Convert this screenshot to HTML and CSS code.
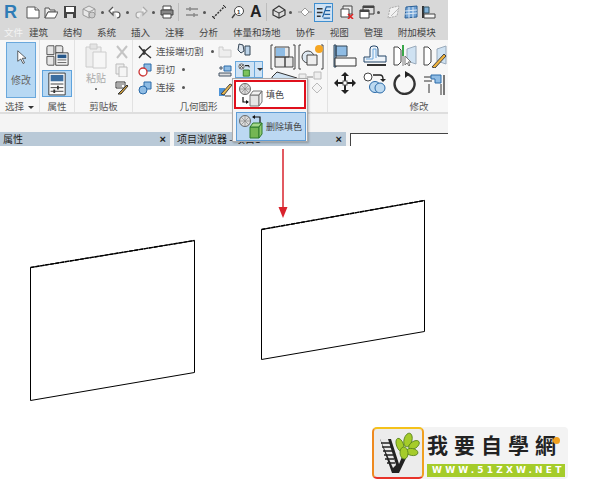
FILE: index.html
```html
<!DOCTYPE html>
<html lang="zh">
<head>
<meta charset="utf-8">
<title>填色</title>
<link rel="stylesheet" href="styles.css">
</head>
<body>
<div class="app">
  <header class="ribbon">
    <div class="qat">
      <span class="rlogo">R</span>
      <svg class="ic" viewBox="0 0 14 14"><path d="M1 2h8l4 3v8H1z" fill="#fff" stroke="#555"/><path d="M9 2v3h4" fill="#ddd" stroke="#555"/></svg>
      <svg class="ic" viewBox="0 0 14 14"><path d="M1 3h4l1 2h5v2H4l-3 6z" fill="#eee" stroke="#555"/><path d="M4 7h10l-3 6H1z" fill="#fff" stroke="#555"/></svg>
      <svg class="ic" viewBox="0 0 14 14"><path d="M1 1h12v12H1z" fill="#444"/><path d="M3 2h8v5H3z" fill="#fff"/><path d="M4 9h6v4H4z" fill="#ddd"/></svg>
      <svg class="ic" viewBox="0 0 14 14"><path d="M7 1l6 3v6l-6 3-6-3V4z" fill="#e8e8e8" stroke="#999"/><path d="M1 4l6 3 6-3M7 7v6" fill="none" stroke="#999"/><circle cx="10" cy="10" r="3" fill="#ccc" stroke="#999"/></svg>
      <span class="dot"></span>
      <svg class="ic" viewBox="0 0 14 14"><path d="M5 2L1 6l4 4V7h4q3 0 3 3t-3 3" fill="#fff" stroke="#555" stroke-width="1.2"/></svg>
      <span class="dot"></span>
      <svg class="ic" viewBox="0 0 14 14"><path d="M9 2l4 4-4 4V7H5q-3 0-3 3t3 3" fill="#eee" stroke="#aaa" stroke-width="1.2"/></svg>
      <span class="dot"></span>
      <svg class="ic" viewBox="0 0 14 14"><path d="M3 1h8v4H3z" fill="#fff" stroke="#444"/><path d="M1 5h12v5H1z" fill="#888" stroke="#444"/><path d="M3 9h8v4H3z" fill="#fff" stroke="#444"/></svg>
      <span class="sep"></span>
      <svg class="ic" viewBox="0 0 14 14"><path d="M1 4h12M1 10h12M5 2v4M9 8v4" fill="none" stroke="#888" stroke-width="1.4"/></svg>
      <span class="dot"></span>
      <svg class="ic" viewBox="0 0 14 14"><path d="M1 13L13 1" stroke="#333" stroke-width="1.5" stroke-dasharray="2 1.2"/><path d="M0 11l3 3M11 0l3 3" stroke="#333"/></svg>
      <svg class="ic" viewBox="0 0 14 14"><circle cx="8" cy="6" r="4.5" fill="#fff" stroke="#444"/><path d="M4 9l-3 4" stroke="#444" stroke-width="1.4"/><text x="6" y="8.500" class="mini">1</text></svg>
      <span class="big-a">A</span>
      <span class="sep"></span>
      <svg class="ic" viewBox="0 0 14 14"><path d="M7 1l6 4v5l-6 3-6-3V5z" fill="#ddd" stroke="#333" stroke-width="1.2"/><path d="M1 5l6 3 6-3M7 8v5" fill="none" stroke="#333"/></svg>
      <span class="dot"></span>
      <svg class="ic" viewBox="0 0 14 14"><path d="M7 3l4 4-4 4-4-4z" fill="#fff" stroke="#999"/><path d="M0 7h3M11 7h3" stroke="#999"/></svg>
      <svg class="ic active" viewBox="0 0 18 18"><path d="M2 5h6M2 9h6M2 13h4" stroke="#333" stroke-width="1.5"/><path d="M8 14L12 3h5M11 7h5M10 11h6M9 15h7" fill="none" stroke="#1c5fa0" stroke-width="1.2"/></svg>
      <svg class="ic" viewBox="0 0 14 14"><path d="M3 1h9v8H3z" fill="#eee" stroke="#444"/><path d="M1 4h8v8H1z" fill="#fff" stroke="#444"/><path d="M8 9l5 5M13 9l-5 5" stroke="#d22" stroke-width="1.6"/></svg>
      <svg class="ic" viewBox="0 0 16 14"><path d="M4 1h11v8H4z" fill="#ddd" stroke="#333"/><path d="M1 5h9v8H1z" fill="#fff" stroke="#333"/><path d="M4 1h11v2H4zM1 5h9v2H1z" fill="#444"/></svg>
      <span class="dot"></span>
      <svg class="ic" viewBox="0 0 14 14"><path d="M2 13l2-10 9-2-2 10z" fill="#f2f2f2" stroke="#aaa" stroke-dasharray="2 1"/><path d="M5 11l7-7" stroke="#bbb"/></svg>
      <svg class="ic" viewBox="0 0 14 14"><path d="M2 2l11-1v11L1 13z" fill="#6fa1d4" stroke="#2a5f96"/><path d="M1 6l12-1M1 9l12-1M5 2v11M9 2v11" stroke="#dbe8f5"/></svg>
      <svg class="ic" viewBox="0 0 16 14"><path d="M1 1h2v12H1z" fill="#333"/><path d="M3 2h5v6H3z" fill="#7fb0d8" stroke="#356"/><path d="M3 9h11v4H3z" fill="#f5f5f5" stroke="#444"/></svg>
    </div>
    <nav class="tabs">
      <span class="tab-file">文件</span><span>建筑</span><span>结构</span><span>系统</span><span>插入</span><span>注释</span><span>分析</span><span>体量和场地</span><span>协作</span><span>视图</span><span>管理</span><span>附加模块</span>
    </nav>
    <div class="panels">
      <section class="panel p-sel">
        <div class="body">
          <div class="modify-btn">
            <svg class="ptr" viewBox="0 0 14 20"><path d="M2 1v14l4-3 3 6 2-1-3-6h5z" fill="#fff" stroke="#333"/></svg>
            <span>修改</span>
          </div>
        </div>
        <div class="lbl">选择 <i class="tri"></i></div>
      </section>
      <section class="panel p-prop">
        <div class="body col">
          <svg class="i22" viewBox="0 0 26 24"><path d="M1 3q0-2 2-2h6v10H1zM11 1h6q2 0 2 2v6h-8zM1 13h8v10H3q-2 0-2-2z" fill="#e6e6e6" stroke="#444"/><path d="M11 9h14v14H11z" fill="#f6f6f6" stroke="#333"/><path d="M13 11h10v4H13z" fill="#26578a"/><path d="M13 17h10M13 20h10" stroke="#555"/></svg>
          <div class="prop-btn">
            <svg class="i22" viewBox="0 0 22 26"><path d="M2 1h18v24H2z" fill="#fafafa" stroke="#333"/><path d="M4 3h14v7H4z" fill="#3b6ea0"/><path d="M4 13h14M4 17h14M4 21h14" stroke="#333"/><path d="M12 15v4M8 19v4" stroke="#333" stroke-width="2"/></svg>
          </div>
        </div>
        <div class="lbl">属性</div>
      </section>
      <section class="panel p-clip">
        <div class="body clip">
          <div class="paste">
            <svg class="i28" viewBox="0 0 22 26"><path d="M1 4h15v20H1z" fill="#eee" stroke="#ccc"/><path d="M5 1h7v5H5z" fill="#e4e4e4" stroke="#ccc"/><path d="M8 9h13v16H8z" fill="#f6f6f6" stroke="#ccc"/></svg>
            <span>粘贴</span><i class="tiny-dot"></i>
          </div>
          <div class="clip-col">
            <svg class="i14" viewBox="0 0 14 14"><path d="M2 1l10 12M12 1L2 13" stroke="#c4c4c4" stroke-width="2"/></svg>
            <svg class="i14" viewBox="0 0 14 14"><path d="M1 1h8v10H1z" fill="#eee" stroke="#bbb"/><path d="M4 4h8v10H4z" fill="#f5f5f5" stroke="#bbb"/></svg>
            <svg class="i14" viewBox="0 0 14 14"><path d="M1 1h9v6H1z" fill="#fff" stroke="#333"/><path d="M2 3h7M2 5h5" stroke="#555"/><path d="M3 13l9-9 1 1-7 8z" fill="#d4a23c" stroke="#333"/></svg>
          </div>
        </div>
        <div class="lbl">剪贴板</div>
      </section>
      <section class="panel p-geo">
        <div class="body geo">
          <div class="geo-col">
            <div class="geo-row"><svg class="i14" viewBox="0 0 14 14"><path d="M1 1l5 6-5 6M13 1L7 6v2l6 5M6 4v6" fill="none" stroke="#333" stroke-width="1.400"/></svg><span>连接端切割</span><i class="tiny-dot gd"></i></div>
            <div class="geo-row"><svg class="i14" viewBox="0 0 14 14"><path d="M6 1h7v7H6z" fill="#8fbce4" stroke="#2a6aa8"/><circle cx="5" cy="9" r="4" fill="#fff" stroke="#c33" stroke-width="1.300"/></svg><span>剪切</span><i class="tiny-dot gd"></i></div>
            <div class="geo-row"><svg class="i14" viewBox="0 0 14 14"><path d="M6 1h7v7H6z" fill="#8fbce4" stroke="#2a6aa8"/><circle cx="5" cy="9" r="4" fill="#8fbce4" stroke="#2a6aa8"/></svg><span>连接</span><i class="tiny-dot gd"></i></div>
          </div>
          <div class="geo-small">
            <svg class="i14" viewBox="0 0 14 14"><path d="M1 2h4v3h8v7H1z" fill="#eee" stroke="#ccc"/></svg>
            <svg class="i14" viewBox="0 0 14 14"><path d="M1 4h4M3 2v4M1 9h12v3H1z" stroke="#456" fill="#ddd"/><path d="M6 2h7v5H6z" fill="#8fbce4" stroke="#2a6aa8"/></svg>
            <svg class="i14" viewBox="0 0 14 14"><path d="M1 5h6v8H1z" fill="#4f95d8"/><path d="M7 13H13M3 11l9-10 2 1-8 10z" fill="#e8b64c" stroke="#444"/></svg>
          </div>
          <div class="geo-fill">
            <svg class="i14 top" viewBox="0 0 14 14"><path d="M2 1l4 1 1 6-3 2-3-3z" fill="#dfe7ef" stroke="#345"/><path d="M8 3h5v9H8z" fill="#bcd4ea" stroke="#345"/></svg>
            <div class="fill-btn">
              <svg class="i16" viewBox="0 0 16 16"><circle cx="4" cy="4" r="3" fill="#ddd" stroke="#555"/><path d="M2 2l4 4M6 2L2 6" stroke="#555"/><path d="M8 3h4l1 2" fill="none" stroke="#222" stroke-width="1.200"/><path d="M6 8h7v7H6z" fill="#7cc35c" stroke="#2a7a28"/></svg>
              <span class="fill-arrow"><i class="tri"></i></span>
            </div>
          </div>
          <div class="geo-large">
            <svg class="i26" viewBox="0 0 26 26"><path d="M3 1H1v24h2M23 1h2v24h-2" fill="none" stroke="#444"/><path d="M5 3h14v10H5zM5 13h10v10H5zM15 13h8v10h-8z" fill="#e8e8e8" stroke="#444"/><path d="M6 4h9v8H6z" fill="#8fbce4"/></svg>
            <svg class="i26" viewBox="0 0 26 26"><path d="M3 1H1v24h2M23 1h2v24h-2" fill="none" stroke="#444"/><circle cx="10" cy="13" r="6" fill="#dfe9f2" stroke="#444"/><path d="M9 11h10v10H9z" fill="#eee" stroke="#444"/><circle cx="21" cy="5" r="4" fill="#f5a623"/></svg>
            <svg class="peek" viewBox="0 0 54 22"><path d="M2 6L7 1l20 6v4H2z" fill="#cfe2f2" stroke="#333"/><path d="M29 3h7v7h-7zM44 1h7v7h-7z" fill="#eee" stroke="#bbb"/><path d="M37 6h6" stroke="#888"/><path d="M47 12l5 5-5 5-5-5z" fill="#f4f4f4" stroke="#bbb"/></svg>
          </div>
        </div>
        <div class="lbl lbl-geo">几何图形</div>
      </section>
      <section class="panel p-mod">
        <div class="body mod">
          <svg class="i24" viewBox="0 0 24 24"><path d="M1 1h2v22H1zM3 2h11v10H3z" fill="#8fbce4" stroke="#345"/><path d="M2 14h21v8H2z" fill="#fafafa" stroke="#333"/></svg>
          <svg class="i24" viewBox="0 0 24 24"><path d="M1 18v-5h6V5q0-3 3-3h2q3 0 3 3v7h8v6z" fill="#eef4fa" stroke="#246"/><path d="M4 21h19" stroke="#333" stroke-width="2"/><path d="M3 15h7V5h3v9" fill="none" stroke="#6aa6dc"/></svg>
          <svg class="i24" viewBox="0 0 24 24"><path d="M1 3h4l3 3v12l-3 3H1z" fill="#fff" stroke="#444"/><path d="M10 1v11" stroke="#3aa84a" stroke-width="2"/><path d="M10 12v10" stroke="#bbb" stroke-width="2"/><path d="M14 5l9-3v18l-9-3z" fill="#cfe2f2" stroke="#9ab"/><path d="M12 12v9l2-2 2 3 1-1-2-3h3z" fill="#fff" stroke="#777"/></svg>
          <svg class="i24" viewBox="0 0 24 24"><path d="M1 3h4l3 3v12l-3 3H1z" fill="#fff" stroke="#444"/><path d="M14 5l9-3v18l-9-3z" fill="#cfe2f2" stroke="#9ab"/><path d="M9 23l12-13 2 2-11 12z" fill="#f0b33c" stroke="#444"/></svg>
          <svg class="i24" viewBox="0 0 24 24"><path d="M12 1l4 4h-3v6h6V8l4 4-4 4v-3h-6v6h3l-4 4-4-4h3v-6H5v3l-4-4 4-4v3h6V5H8z" fill="#222"/><rect x="10" y="10" width="4" height="4" fill="#fff" stroke="#555"/></svg>
          <svg class="i24" viewBox="0 0 24 24"><circle cx="5" cy="6" r="4" fill="#fff" stroke="#444"/><path d="M10 4h7q3 0 3 4" fill="none" stroke="#222" stroke-width="1.400"/><path d="M17 8l3 3 3-3z" fill="#222"/><circle cx="12" cy="16" r="5.500" fill="#bcd9f0" stroke="#2a6aa8"/><circle cx="17" cy="17" r="5" fill="#bcd9f0" stroke="#2a6aa8"/></svg>
          <svg class="i24" viewBox="0 0 24 24"><path d="M7 4a10 10 0 1 0 6-1" fill="none" stroke="#333" stroke-width="2.400"/><path d="M12 0l5 3-5 4z" fill="#222"/></svg>
          <svg class="i24" viewBox="0 0 24 24"><path d="M1 6h12M1 10h8M6 22V13M18 24V13" stroke="#333"/><path d="M8 4h10v8h-6V8H8z" fill="#8fbce4" stroke="#2a6aa8"/><path d="M21 24V4" stroke="#333" stroke-width="1.300"/></svg>
        </div>
        <div class="lbl lbl-mod">修改</div>
      </section>
    </div>
  </header>

  <div class="gap-row"></div>
  <div class="dock">
    <div class="dock-tab d1"><span>属性</span><b>×</b></div>
    <div class="dock-tab d2"><span>项目浏览器 - 项目1</span><b>×</b></div>
    <div class="view-edge"></div>
  </div>

  <div class="menu">
    <div class="menu-item first">
      <svg class="mi" viewBox="0 0 26 24"><circle cx="7" cy="6" r="5.500" fill="#ddd" stroke="#666"/><path d="M3 2l8 8M11 2l-8 8M1.500 6h11M7 .5v11" stroke="#888" stroke-width=".7"/><path d="M5 14v5h5" fill="none" stroke="#111" stroke-width="1.200"/><path d="M8 17l3 2-3 2z" fill="#111"/><path d="M12 12h9v11h-9z" fill="#e6e6e6" stroke="#777"/><path d="M12 12l3-4h9l-3 4zM21 12l3-4v11l-3 4z" fill="#f2f2f2" stroke="#777"/></svg>
      <span>填色</span>
    </div>
    <div class="menu-item second">
      <svg class="mi" viewBox="0 0 26 24"><circle cx="7" cy="6" r="5.500" fill="#ddd" stroke="#666"/><path d="M3 2l8 8M11 2l-8 8M1.500 6h11M7 .5v11" stroke="#888" stroke-width=".7"/><path d="M17 2h5v6" fill="none" stroke="#111" stroke-width="1.200"/><path d="M17 0l-3 2 3 2z" fill="#111"/><path d="M12 12h9v11h-9z" fill="#74b654" stroke="#2e7a2c"/><path d="M12 12l3-4h9l-3 4z" fill="#a5d88a" stroke="#2e7a2c"/><path d="M21 12l3-4v11l-3 4z" fill="#8fca6f" stroke="#2e7a2c"/></svg>
      <span>删除填色</span>
    </div>
  </div>

  <svg class="drawing" viewBox="0 0 600 500">
    <path d="M30.500 267.500L194.500 240.500V372.500L30.500 400.500Z" fill="#fff" stroke="#000"/>
    <path d="M261.500 229.500L424.500 200.500V331.500L261.500 359.500Z" fill="#fff" stroke="#000"/>
    <path d="M30.500 267.500L194.500 240.500M261.500 229.500L424.500 200.500" fill="none" stroke="#000" stroke-width="1.400" stroke-dasharray="4 1"/>
    <path d="M283 149V210" stroke="#d9232d" stroke-width="1.500"/>
    <path d="M278.500 207L283 218L287.500 207Z" fill="#d9232d"/>
  </svg>

  <div class="logo">
    <div class="logo-badge">
      <svg viewBox="0 0 46 46">
        <path d="M5 9h11l8 25 5-12h5L24 43h-7z" fill="#222"/>
        <path d="M5 9h8l8 26-3 3z" fill="#e8e8e8"/>
        <path d="M6 13h9M7 17h9M8 21h9M9 25h9M10 29h9M12 33h8" stroke="#222" stroke-width="1.500"/>
        <g fill="#a5cc2a" stroke="#55801a" stroke-width=".8">
          <ellipse cx="25" cy="15" rx="3.500" ry="7" transform="rotate(-20 25 15)"/>
          <ellipse cx="33" cy="10" rx="4" ry="7" transform="rotate(15 33 10)"/>
          <ellipse cx="39" cy="15" rx="3.500" ry="6" transform="rotate(55 39 15)"/>
          <ellipse cx="37" cy="22" rx="3.500" ry="6" transform="rotate(100 37 22)"/>
          <ellipse cx="29" cy="23" rx="4" ry="6" transform="rotate(-5 29 23)"/>
        </g>
      </svg>
    </div>
    <div class="logo-side">
      <div class="logo-title">我要自學網</div>
      <div class="logo-url">WWW.51ZXW.NET</div>
    </div>
    <span class="logo-mark"></span>
  </div>
</div>
</body>
</html>
```
FILE: styles.css
```css
* { box-sizing: border-box; }
html, body { margin: 0; padding: 0; background: #fff; }
body { font-family: "Noto Sans CJK SC", "Liberation Sans", sans-serif; color: #444; }
.app { position: relative; isolation: isolate; width: 600px; height: 500px; overflow: hidden; background: #fff; }
.ribbon { position: relative; width: 448px; }
svg { display: block; flex: none; }

.qat { height: 24px; background: #d8d8d8; display: grid; align-items: center; padding-left: 4px;
  grid-template-columns: 14px 8px 14px 4px 14px 5px 13px 6px 14px 5px 4px 3px 14px 4px 4px 4px 14px 4px 4px 4px 15px 3px 2px 5px 14px 4px 4px 5px 14px 5px 14px 5px 12px 4px 2px 4px 14px 3px 4px 5px 13px 3px 19px 7px 15px 4px 16px 2px 4px 5px 14px 4px 14px 3px 16px;
}
.qat .ic { width: 14px; height: 14px; }
.qat > :nth-child(1) { grid-column: 1; }
.qat > svg:nth-child(2) { grid-column: 3; }
.qat > svg:nth-child(3) { grid-column: 5; }
.qat > svg:nth-child(4) { grid-column: 7; }
.qat > svg:nth-child(5) { grid-column: 9; }
.qat > :nth-child(6) { grid-column: 11; }
.qat > :nth-child(7) { grid-column: 13; }
.qat > :nth-child(8) { grid-column: 15; }
.qat > :nth-child(9) { grid-column: 17; }
.qat > :nth-child(10) { grid-column: 19; }
.qat > :nth-child(11) { grid-column: 21; }
.qat > :nth-child(12) { grid-column: 23; }
.qat > :nth-child(13) { grid-column: 25; }
.qat > :nth-child(14) { grid-column: 27; }
.qat > :nth-child(15) { grid-column: 29; }
.qat > :nth-child(16) { grid-column: 31; }
.qat > :nth-child(17) { grid-column: 33; }
.qat > :nth-child(18) { grid-column: 35; }
.qat > :nth-child(19) { grid-column: 37; }
.qat > :nth-child(20) { grid-column: 39; }
.qat > :nth-child(21) { grid-column: 41; }
.qat > :nth-child(22) { grid-column: 43; width: 19px; height: 19px; }
.qat > :nth-child(23) { grid-column: 45; }
.qat > :nth-child(24) { grid-column: 47; width: 16px; }
.qat > :nth-child(25) { grid-column: 49; }
.qat > :nth-child(26) { grid-column: 51; }
.qat > :nth-child(27) { grid-column: 53; }
.qat > :nth-child(28) { grid-column: 55; width: 16px; }
.rlogo { font: 700 18px/20px "Liberation Sans", sans-serif; color: #2f7cb6; }
.mini { font: 700 6px "Liberation Sans", sans-serif; fill: #333; }
.dot { width: 3px; height: 3px; background: #555; border-radius: 50%; }
.sep { width: 1px; height: 18px; background: #bdbdbd; }
.big-a { font: 700 16px/1 "Liberation Sans", sans-serif; color: #222; }
.ic.active { background: #cfe2f4; border: 1px solid #3f8fd0; }

.tabs { height: 16px; background: #d8d8d8; display: flex; align-items: center; gap: 15px; padding-left: 4px; font-size: 9.500px; line-height: 14px; color: #444; white-space: nowrap; }
.tab-file { color: #f4f4f4; margin-right: -9px; }

.panels { height: 74px; display: flex; background: #f7f7f7; border-bottom: 2px solid #dedede; }
.panel { display: flex; flex-direction: column; border-right: 1px solid #e2e2e2; flex: none; }
.panel .body { height: 60px; padding-top: 2px; }
.lbl { height: 12px; text-align: center; font-size: 9.500px; line-height: 12px; color: #555; }
.lbl-geo { padding-right: 63px; }
.lbl-mod { padding-left: 62px; }
.p-sel { width: 40px; }
.p-prop { width: 35px; }
.p-clip { width: 58px; }
.p-geo { width: 195px; }
.p-mod { width: 120px; border-right: 0; }

.tri { display: inline-block; width: 0; height: 0; border: 3px solid transparent; border-top: 3px solid #333; border-bottom: 0; vertical-align: middle; margin-left: 2px; }
.modify-btn { margin-left: 6px; width: 30px; height: 56px; background: #b7d8f3; border: 1px solid #6aa8dc; display: flex; flex-direction: column; align-items: center; font-size: 10px; color: #666; padding-top: 7px; gap: 9px; line-height: 12px; }
.ptr { width: 11px; height: 15px; }

.panel .col { display: flex; flex-direction: column; align-items: center; gap: 3px; padding-top: 4px; }
.i22 { width: 23px; height: 23px; }
.prop-btn { width: 30px; height: 27px; background: #b7d8f3; border: 1px solid #5ea3dd; display: flex; align-items: center; justify-content: center; }
.prop-btn .i22 { width: 20px; height: 24px; }

.clip { display: flex; padding-left: 7px; gap: 5px; }
.paste { width: 28px; display: flex; flex-direction: column; align-items: center; font-size: 10px; line-height: 12px; color: #aaa; padding-top: 1px; gap: 3px; }
.i28 { width: 22px; height: 26px; }
.tiny-dot { display: block; width: 2px; height: 2px; background: #555; border-radius: 50%; margin-top: 1px; }
.clip-col { display: flex; flex-direction: column; gap: 4px; padding-top: 3px; }
.i14 { width: 14px; height: 14px; }

.geo { display: flex; padding-left: 5px; }
.geo-col { width: 80px; display: flex; flex-direction: column; gap: 3px; padding-top: 2px; }
.geo-row { height: 15px; display: flex; align-items: center; gap: 4px; font-size: 9.500px; line-height: 15px; color: #555; white-space: nowrap; }
.tiny-dot.gd { margin: 0 0 0 3px; width: 3px; height: 3px; }
.geo-small { width: 16px; display: flex; flex-direction: column; gap: 5px; padding-top: 3px; }
.geo-fill { width: 30px; margin-left: 1px; padding-top: 1px; }
.geo-fill .top { margin-left: 2px; }
.fill-btn { display: flex; width: 28px; height: 17px; background: #cfe3f5; border: 1px solid #6aa8dc; margin-top: 4px; align-items: center; padding-left: 2px; }
.i16 { width: 14px; height: 14px; }
.fill-arrow { margin-left: 2px; padding-left: 1px; border-left: 1px solid #6aa8dc; height: 15px; display: flex; align-items: center; }
.fill-arrow .tri { margin-left: 1px; }
.geo-large { display: flex; flex-wrap: wrap; align-content: flex-start; gap: 1px 2px; width: 56px; margin-left: 5px; margin-top: 2px; }
.i26 { width: 26px; height: 26px; }
.peek { width: 54px; height: 22px; }
.i24 { width: 24px; height: 24px; }

.panel .mod { display: grid; grid-template-columns: repeat(4, 24px); column-gap: 6px; row-gap: 3px; padding: 4px 0 0 5px; align-content: start; }

.gap-row { position: relative; width: 448px; height: 18px; background: #f4f4f4; }
.dock { position: relative; width: 448px; height: 14px; display: flex; font-size: 10px; line-height: 14px; color: #222; background: #f4f4f4; }
.dock-tab { background: #b9c9d7; display: flex; justify-content: space-between; align-items: center; padding: 0 4px 0 3px; white-space: nowrap; overflow: hidden; }
.dock-tab b { font: 700 11px "Liberation Sans", sans-serif; }
.d1 { width: 170px; margin-right: 4px; }
.d2 { width: 172px; margin-right: 4px; }
.view-edge { flex: 1; background: #fff; border-top: 1px solid #444; border-left: 1px solid #444; margin-top: 1px; }

.menu { position: absolute; left: 232px; top: 78px; width: 76px; height: 64px; background: #f4f4f4; border: 1px solid #aaa; padding: 1px; box-shadow: 1px 1px 2px rgba(0,0,0,.25); }
.menu-item { display: flex; align-items: center; gap: 2px; font-size: 9px; color: #444; white-space: nowrap; }
.first { height: 29px; background: #fff; border: 2px solid #e0101c; padding-left: 2px; }
.second { height: 29px; margin: 3px 0 0 2px; background: #bcd8f2; border: 1px solid #5f9dd6; padding-left: 1px; }
.mi { width: 26px; height: 24px; }

.drawing { position: absolute; left: 0; top: 0; width: 600px; height: 500px; z-index: -1; pointer-events: none; }

.logo { position: absolute; left: 372px; top: 427px; width: 196px; height: 52px; display: flex; gap: 3px; background: #f3f3f3; border-radius: 4px; }
.logo-badge { width: 52px; height: 52px; border: 2px solid; border-color: #f5c21b #f0a020 #e8332a #ee8a20; border-radius: 5px; background: #ececec; padding: 1px; }
.logo-badge svg { width: 46px; height: 46px; }
.logo-side { flex: 1; padding-top: 4px; min-width: 0; }
.logo-title { font: 700 21px/26px "Noto Sans CJK TC", "Noto Sans CJK SC", sans-serif; color: #222; letter-spacing: 6px; white-space: nowrap; }
.logo-url { margin-top: 7px; width: 138px; height: 13px; background: #a5cc2a; color: #fff; font: 700 9px/13px "DejaVu Sans", sans-serif; letter-spacing: 3.200px; padding-left: 5px; white-space: nowrap; overflow: hidden; }
.logo-mark { position: absolute; left: 181px; top: 10px; width: 7px; height: 7px; border-radius: 50%; background: #f0a020; }
```
